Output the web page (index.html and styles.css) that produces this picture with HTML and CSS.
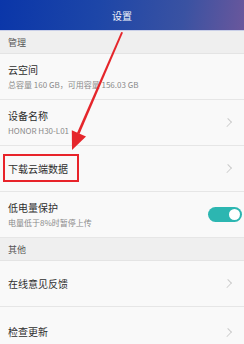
FILE: index.html
```
<!DOCTYPE html>
<html lang="zh">
<head>
<meta charset="utf-8">
<link rel="stylesheet" href="styles.css">
</head>
<body>
<div class="page">
  <header class="topbar"><span class="title">设置</span></header>
  <div class="section">管理</div>
  <div class="row tall">
    <div class="texts">
      <div class="main">云空间</div>
      <div class="sub">总容量 160 GB，可用容量 156.03 GB</div>
    </div>
  </div>
  <div class="row tall">
    <div class="texts">
      <div class="main">设备名称</div>
      <div class="sub">HONOR H30-L01</div>
    </div>
    <span class="chev"></span>
  </div>
  <div class="row">
    <div class="texts">
      <div class="main"><span class="marked">下载云端数据</span></div>
    </div>
    <span class="chev"></span>
  </div>
  <div class="row tall">
    <div class="texts">
      <div class="main">低电量保护</div>
      <div class="sub">电量低于8%时暂停上传</div>
    </div>
    <span class="toggle"><span class="knob"></span></span>
  </div>
  <div class="section">其他</div>
  <div class="row">
    <div class="texts"><div class="main">在线意见反馈</div></div>
    <span class="chev"></span>
  </div>
  <div class="row last">
    <div class="texts"><div class="main">检查更新</div></div>
    <span class="chev"></span>
  </div>
  <svg class="arrow" width="244" height="344" viewBox="0 0 244 344">
    <polygon points="121.2,32 123,32.6 79.5,134 77,133" fill="#e5262b"/>
    <polygon points="72,150 71.8,130.2 86,136.4" fill="#e5262b"/>
  </svg>
</div>
</body>
</html>
```
FILE: styles.css
```
* { box-sizing: border-box; margin: 0; padding: 0; }
html, body { width: 244px; height: 344px; overflow: hidden; }
body {
  font-family: "Noto Sans CJK SC", "Noto Sans", sans-serif;
  background: #f9f9f9;
}
.page { position: relative; width: 244px; height: 344px; }
.topbar {
  height: 31px;
  display: flex;
  align-items: center;
  justify-content: center;
  background: linear-gradient(100deg, #0a36a9 0%, #1d46a8 40%, #3a52a2 75%, #6a579c 100%);
  border-bottom: 1px solid #c9cfe8;
}
.title { color: #f2f4fb; font-size: 10px; }
.section {
  height: 23px;
  display: flex;
  align-items: center;
  padding-left: 8px;
  background: #efefef;
  color: #555;
  font-size: 9px;
  border-bottom: 1px solid #e4e4e4;
}
.row {
  display: flex;
  align-items: center;
  justify-content: space-between;
  height: 46px;
  padding: 0 8px;
  background: #f9f9f9;
  border-bottom: 1px solid #e6e6e6;
}
.row.last { border-bottom: none; height: 50px; }
.texts { display: flex; flex-direction: column; gap: 4px; }
.main { color: #2e2e2e; font-size: 10px; line-height: 12px; }
.sub { color: #8a8a8a; font-size: 8px; line-height: 10px; }
.marked { position: relative; }
.marked::after {
  content: "";
  position: absolute;
  left: -5px; right: -11px; top: -7px; bottom: -6px;
  border: 2px solid #e8232a;
}
.chev {
  width: 7px; height: 7px;
  border-top: 1px solid #cacaca;
  border-right: 1px solid #cacaca;
  transform: rotate(45deg) scaleX(0.8);
  margin-right: 5px;
}
.toggle {
  width: 34px; height: 15px;
  border-radius: 8px;
  background: #2cb6b1;
  display: flex;
  align-items: center;
  justify-content: flex-end;
  padding-right: 2px;
  margin-right: -6px;
}
.knob { width: 11px; height: 11px; border-radius: 50%; background: #fff; }
.arrow { position: absolute; left: 0; top: 0; pointer-events: none; }
```
